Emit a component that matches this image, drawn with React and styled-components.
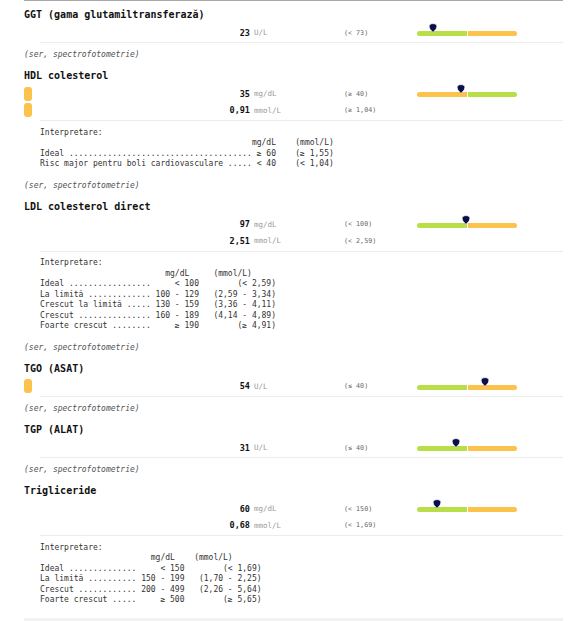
import React from 'react';
import styled, { createGlobalStyle } from 'styled-components';

const GlobalStyle = createGlobalStyle`
  body {
    margin: 0;
    background: #fff;
    color: #111;
    font-family: "DejaVu Sans Mono", "Liberation Mono", monospace;
  }
`;

const GREEN = '#b8df48';
const ORANGE = '#fbc24c';

const Page = styled.div`
  padding: 0 23px 0 24px;
`;

const TopRule = styled.div`
  height: 1px;
  background: #a9a9a9;
`;

const Section = styled.section`
  display: flex;
  flex-direction: column;
`;

const Title = styled.h3`
  margin: ${(p) => (p.$first ? '7px' : '0')} 0 0 0;
  font-size: 10px;
  line-height: 14px;
  font-weight: bold;
  color: #111;
`;

const Rows = styled.div`
  margin-top: 2.3px;
  display: flex;
  flex-direction: column;
`;

const Row = styled.div`
  display: flex;
  align-items: center;
  height: 16.5px;
`;

const FlagSlot = styled.div`
  width: 8px;
  height: 14px;
  flex: 0 0 auto;
`;

const Flag = styled.div`
  width: 8px;
  height: 14px;
  border-radius: 3px;
  background: ${ORANGE};
`;

const Value = styled.div`
  width: 218px;
  text-align: right;
  font-size: 8.5px;
  font-weight: bold;
  color: #111;
`;

const Unit = styled.div`
  margin-left: 4px;
  width: 90px;
  font-size: 7.5px;
  color: #9a9a9a;
`;

const Ref = styled.div`
  width: 73px;
  font-size: 6.7px;
  color: #666;
`;

const Bar = styled.div`
  position: relative;
  width: 100px;
  height: 5px;
  margin-top: 2px;
  display: flex;
  gap: 1px;
`;

const Segment = styled.div`
  flex: 1;
  background: ${(p) => p.$color};
  border-radius: ${(p) => (p.$side === 'left' ? '3px 0 0 3px' : '0 3px 3px 0')};
`;

const Marker = styled.svg`
  position: absolute;
  top: -8px;
  width: 9px;
  height: 10px;
  transform: translateX(-50%);
`;

const Divider = styled.div`
  margin: 1.5px 0 0 16px;
  height: 1px;
  background: #ececec;
`;

const Interp = styled.pre`
  margin: 6.8px 0 0 16px;
  font-family: "DejaVu Sans Mono", "Liberation Mono", monospace;
  font-size: 8px;
  line-height: 10.5px;
  color: #333;
`;

const Note = styled.div`
  margin: ${(p) => (p.$afterInterp ? '9.8px' : '5.9px')} 0 8.1px 0;
  font-size: 8px;
  line-height: 12px;
  font-style: italic;
  color: #555;
`;

const Footer = styled.div`
  margin-top: 12.5px;
  height: 6px;
  background: #f2f2f2;
`;

const dots = (n) => '.'.repeat(n);
const sp = (n) => ' '.repeat(n);

const tests = [
  {
    title: 'GGT (gama glutamiltransferază)',
    rows: [{ value: '23', unit: 'U/L', ref: '(< 73)', bar: { colors: [GREEN, ORANGE], pos: (23 / 73) * 50 } }],
    note: true,
  },
  {
    title: 'HDL colesterol',
    rows: [
      { value: '35', unit: 'mg/dL', ref: '(≥ 40)', flag: true, bar: { colors: [ORANGE, GREEN], pos: (35 / 40) * 50 } },
      { value: '0,91', unit: 'mmol/L', ref: '(≥ 1,04)', flag: true },
    ],
    interp: [
      'Interpretare:',
      sp(44) + 'mg/dL' + sp(4) + '(mmol/L)',
      'Ideal ' + dots(38) + ' ≥ 60' + sp(4) + '(≥ 1,55)',
      'Risc major pentru boli cardiovasculare ' + dots(5) + ' < 40' + sp(4) + '(< 1,04)',
    ],
    note: true,
  },
  {
    title: 'LDL colesterol direct',
    rows: [
      { value: '97', unit: 'mg/dL', ref: '(< 100)', bar: { colors: [GREEN, ORANGE], pos: (97 / 100) * 50 } },
      { value: '2,51', unit: 'mmol/L', ref: '(< 2,59)' },
    ],
    interp: [
      'Interpretare:',
      sp(26) + 'mg/dL' + sp(5) + '(mmol/L)',
      'Ideal ' + dots(17) + sp(5) + '< 100' + sp(8) + '(< 2,59)',
      'La limită ' + dots(13) + ' 100 - 129   (2,59 - 3,34)',
      'Crescut la limită ' + dots(5) + ' 130 - 159   (3,36 - 4,11)',
      'Crescut ' + dots(15) + ' 160 - 189   (4,14 - 4,89)',
      'Foarte crescut ' + dots(8) + sp(5) + '≥ 190' + sp(8) + '(≥ 4,91)',
    ],
    note: true,
  },
  {
    title: 'TGO (ASAT)',
    rows: [{ value: '54', unit: 'U/L', ref: '(≤ 40)', flag: true, bar: { colors: [GREEN, ORANGE], pos: 50 + (14 / 40) * 50 } }],
    note: true,
  },
  {
    title: 'TGP (ALAT)',
    rows: [{ value: '31', unit: 'U/L', ref: '(≤ 40)', bar: { colors: [GREEN, ORANGE], pos: (31 / 40) * 50 } }],
    note: true,
  },
  {
    title: 'Trigliceride',
    rows: [
      { value: '60', unit: 'mg/dL', ref: '(< 150)', bar: { colors: [GREEN, ORANGE], pos: (60 / 150) * 50 } },
      { value: '0,68', unit: 'mmol/L', ref: '(< 1,69)' },
    ],
    interp: [
      'Interpretare:',
      sp(23) + 'mg/dL' + sp(4) + '(mmol/L)',
      'Ideal ' + dots(14) + sp(5) + '< 150' + sp(8) + '(< 1,69)',
      'La limită ' + dots(10) + ' 150 - 199   (1,70 - 2,25)',
      'Crescut ' + dots(12) + ' 200 - 499   (2,26 - 5,64)',
      'Foarte crescut ' + dots(5) + sp(5) + '≥ 500' + sp(8) + '(≥ 5,65)',
    ],
    note: false,
  },
];

const RangeBar = ({ colors, pos }) => (
  <Bar>
    <Segment $color={colors[0]} $side="left" />
    <Segment $color={colors[1]} $side="right" />
    <Marker viewBox="0 0 9 10" style={{ left: `${pos}%` }}>
      <path
        d="M4.5 0.6 C7 0.6 8.4 1.6 8.4 3.6 C8.4 5.8 6.4 7.6 4.5 9.4 C2.6 7.6 0.6 5.8 0.6 3.6 C0.6 1.6 2 0.6 4.5 0.6 Z"
        fill="#0b0f4a"
        stroke="#fff"
        strokeWidth="0.8"
      />
    </Marker>
  </Bar>
);

const TestBlock = ({ test, first }) => (
  <Section>
    <Title $first={first}>{test.title}</Title>
    <Rows>
      {test.rows.map((r, i) => (
        <Row key={i}>
          <FlagSlot>{r.flag && <Flag />}</FlagSlot>
          <Value>{r.value}</Value>
          <Unit>{r.unit}</Unit>
          <Ref>{r.ref}</Ref>
          {r.bar && <RangeBar colors={r.bar.colors} pos={r.bar.pos} />}
        </Row>
      ))}
    </Rows>
    <Divider />
    {test.interp && <Interp>{test.interp.join('\n')}</Interp>}
    {test.note && <Note $afterInterp={!!test.interp}>(ser, spectrofotometrie)</Note>}
  </Section>
);

export default function App() {
  return (
    <Page>
      <GlobalStyle />
      <TopRule />
      {tests.map((t, i) => (
        <TestBlock key={t.title} test={t} first={i === 0} />
      ))}
      <Footer />
    </Page>
  );
}
